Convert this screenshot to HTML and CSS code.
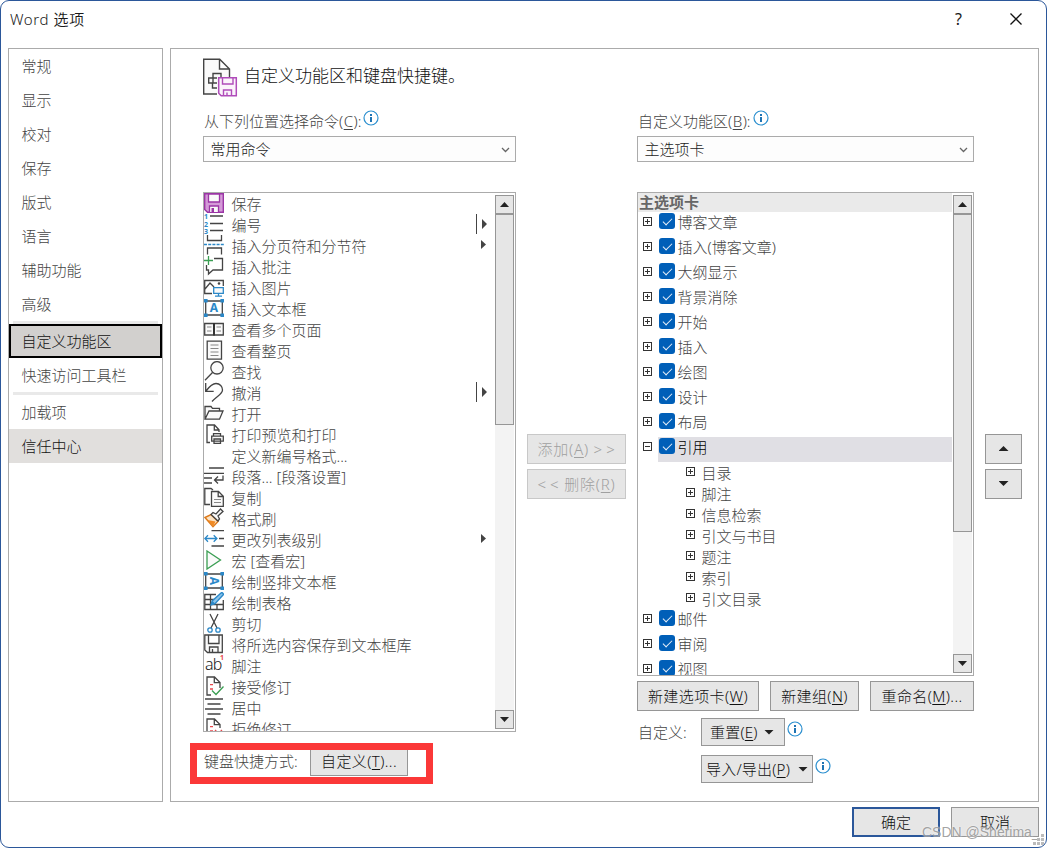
FILE: index.html
```html
<!DOCTYPE html>
<html lang="zh-CN">
<head>
<meta charset="UTF-8">
<meta name="viewport" content="width=device-width, initial-scale=1.0">
<title>Word 选项</title>
<link rel="stylesheet" href="styles.css">
</head>
<body>

<svg class="sprite" width="0" height="0">
  <symbol id="i-save" viewBox="0 0 20 20"><path d="M.7.7h18.6v18.6H3.5L.7 16.5z" fill="#d49ad8" stroke="#9b35a5" stroke-width="1.4"/><path d="M4.5 1h11v8h-11zM5.5 19v-6h9v6" fill="#fafafa" stroke="#9b35a5" stroke-width="1.3"/><path d="M7.5 15h2.500v4h-2.500z" fill="#9b35a5"/></symbol>
  <symbol id="i-break" viewBox="0 0 20 20"><path d="M3.500 0v5.500h14V0M3.500 19.500v-6.500h14v6.500" class="k"/><path d="M0 9.500h20" class="b" stroke-dasharray="3 1.200"/></symbol>
  <symbol id="i-comment" viewBox="0 0 20 20"><path d="M10 2.500h8.500v11.500H9l-4.500 4v-4H2.500v-5" class="k"/><path d="M4.500 0v9M0 4.500h9" class="g"/></symbol>
  <symbol id="i-picture" viewBox="0 0 20 20"><path d="M8 16.500H.7v-13h18.600V9M1 12l5-6 4 4" class="k"/><circle cx="15" cy="6.500" r="1.300" fill="#444"/><path d="M9.700 10.700h9.600v5.600H9.700zM14.500 16.300v2.500M11 19.200h7" class="b f"/></symbol>
  <symbol id="i-frame" viewBox="0 0 20 20"><path d="M1.700 3h16.600v14H1.700z" class="k"/><path d="M0 1h3.600v3.600H0zM16.400 1H20v3.600h-3.600zM0 15.400h3.600V19H0zM16.400 15.400H20V19h-3.600z" fill="#2b88c8"/></symbol>
  <symbol id="i-book" viewBox="0 0 20 20"><path d="M.7 4.500h18.600v11.500H.7z" class="k f"/><path d="M10 4v12.500" stroke="#333" stroke-width="2"/><path d="M3 8h4.500M3 12h4.500M12.500 8H17M12.500 12H17" class="t"/></symbol>
  <symbol id="i-page" viewBox="0 0 20 20"><path d="M3.200 1.200h14.300v18H3.200z" class="k f"/><path d="M6.500 5h8M6.500 8.500h8M6.500 12h8M6.500 15.500h8" class="t"/></symbol>
  <symbol id="i-find" viewBox="0 0 20 20"><circle cx="13" cy="6.800" r="6.200" class="k f"/><path d="M8.500 11.500L1 19.300" class="k"/></symbol>
  <symbol id="i-undo" viewBox="0 0 20 20"><path d="M1.700 1v8.300h8M2 9C5 5 8 1.500 12 1.500c4 0 6.500 3 6.500 6.500 0 4-5.500 6-10.500 11.500" class="k"/></symbol>
  <symbol id="i-open" viewBox="0 0 20 20"><path d="M1 16V3.500h6l1.500 1.800h7V8M1 16.200L5 8h14l-3.500 8.200z" class="k f"/></symbol>
  <symbol id="i-print" viewBox="0 0 20 20"><path d="M6 18.500H3V1h7.500L15 5.800V8M10.300 1v5H15" class="k"/><path d="M9.500 12V9.700h7V12M7.700 12.200h11.600v5H7.700zM10 15h6.500v4.300H10z" class="k f"/></symbol>
  <symbol id="i-para" viewBox="0 0 20 20"><path d="M5 2h15M0 7.300h20M0 12h8M0 17h8M19 9.500V14h-8M14 10.500L10.500 14l3.500 3.500" class="k"/></symbol>
  <symbol id="i-copy" viewBox="0 0 20 20"><path d="M6 17.500H.8v-16H7L9 3" class="k"/><path d="M7.500 4.500h7l4.800 4.800v10H7.500zM14.200 4.500v5h5" class="k f"/><path d="M10 12.500h7M10 15.500h7" class="t"/></symbol>
  <symbol id="i-brush" viewBox="0 0 20 20"><path d="M1 9.500l6-3 7 7-5 5.300z" fill="#fbe3c4" stroke="#dd7a1b" stroke-width="1.400"/><path d="M3.500 12l8 1.500L9 18.500z" fill="#f08a24"/><path d="M7 6.500l2-2 3 1.500 4.500-5 2.500 2.500-5 4.500 1.500 3-1.500 2z" class="k f"/></symbol>
  <symbol id="i-level" viewBox="0 0 20 20"><path d="M7.500 1.700H20M15 9.500h5M7.500 17H20" class="k"/><path d="M.8 9.500h12M4 6.300L.8 9.500 4 12.700M9.700 6.300l3.200 3.200-3.200 3.200" class="b"/></symbol>
  <symbol id="i-macro" viewBox="0 0 20 20"><path d="M3 1l13.500 9L3 19z" class="g f"/></symbol>
  <symbol id="i-table" viewBox="0 0 20 20"><path d="M12 2.500H.8v15h18.500V8M.8 7.500h9M.8 12.500h18.500M6.500 2.500v15M13 12v5.500" class="k"/><path d="M7 13l1.200-4L17 1c1.200-1 3 .8 2 2L11 11.700z" fill="#8cc4ea" stroke="#2b88c8" stroke-width="1.400"/><path d="M7 13l1.500-4 2.500 2.500z" fill="#2b88c8"/></symbol>
  <symbol id="i-cut" viewBox="0 0 20 20"><path d="M6 1l7 14M14 1L7 15" class="k"/><circle cx="6" cy="17" r="2.200" class="b"/><circle cx="14" cy="17" r="2.200" class="b"/></symbol>
  <symbol id="i-disk" viewBox="0 0 20 20"><path d="M.8 1h17.500v17.500H3.500L.8 16zM4.500 1v8.500h10.500V1M5.500 18.500V13h8.500v5.500M8.500 15v3.500" class="k f"/></symbol>
  <symbol id="i-accept" viewBox="0 0 20 20"><path d="M7 19H3V1h7.500L16 6.500V12M10.300 1v5.700H16" class="k"/><path d="M6 8.700h3M6 13h3" class="r"/><path d="M8 14.500l4 4 7.500-8" class="g"/></symbol>
  <symbol id="i-center" viewBox="0 0 20 20"><path d="M1 2h18M3.500 7h13M1 12h18M3.500 17h13" class="k"/></symbol>
  <symbol id="i-reject" viewBox="0 0 20 20"><path d="M7 19H3V1h7.500L16 6.500V10M10.300 1v5.700H16" class="k"/><path d="M6 8.700h3M6 13h3M11 12l7 7M18 12l-7 7" class="r"/></symbol>
  <symbol id="i-info" viewBox="0 0 16 16"><circle cx="8" cy="8" r="7" fill="#fff" stroke="#2b8fcf" stroke-width="1.200"/><path d="M7 4h2v2H7zM7 7h2v5H7z" fill="#1e74b4"/></symbol>
</svg>

<div class="window">
  <div class="titlebar">
    <span class="title">Word 选项</span>
    <span class="help">?</span>
    <svg class="close" viewBox="0 0 12 12"><path d="M.5.5l11 11M11.500.5l-11 11" fill="none" stroke="#111" stroke-width="1.300"/></svg>
  </div>

  <div class="content">
    <div class="sidebar">
      <div class="nav-item">常规</div>
      <div class="nav-item">显示</div>
      <div class="nav-item">校对</div>
      <div class="nav-item">保存</div>
      <div class="nav-item">版式</div>
      <div class="nav-item">语言</div>
      <div class="nav-item">辅助功能</div>
      <div class="nav-item">高级</div>
      <div class="nav-line"></div>
      <div class="nav-item selected">自定义功能区</div>
      <div class="nav-item">快速访问工具栏</div>
      <div class="nav-line"></div>
      <div class="nav-item">加载项</div>
      <div class="nav-item hover">信任中心</div>
    </div>

    <div class="panel">
      <div class="heading">
        <svg class="heading-icon" viewBox="0 0 35 39"><path d="M14 36H.7V1.200h16L26.500 11v8M16.500 1.200V11h10" fill="#fafafa" stroke="#444" stroke-width="1.400"/><path d="M10 19.500V15.500h8V19M9.500 20H5.700v5h3.800M14 20h-4v5h4M9.500 25.500V30H14" fill="none" stroke="#444" stroke-width="1.400"/><path d="M15.700 19.700h17.600v18H18.200l-2.500-2.500z" fill="#fbf3fb" stroke="#b04cba" stroke-width="1.500"/><path d="M19.500 20v6h10.500v-6M20.500 37.500V32h8v5.500M24 34.500v3" fill="none" stroke="#b04cba" stroke-width="1.400"/></svg>
        <span>自定义功能区和键盘快捷键。</span>
      </div>

      <div class="columns">
        <div class="col-left">
          <div class="label"><span>从下列位置选择命令(<u>C</u>):</span><svg class="info"><use href="#i-info"/></svg></div>
          <div class="select">常用命令<svg class="chevron" viewBox="0 0 9 6"><path d="M1 1l3.500 3.500L8 1" fill="none" stroke="#666" stroke-width="1.300"/></svg></div>
          <div class="listbox commands">
            <div class="rows">
              <div class="cmd"><svg><use href="#i-save"/></svg>保存</div>
              <div class="cmd"><svg viewBox="0 0 20 20"><path d="M6 2h13M6 9.500h13M6 16.500h13" class="k"/><g class="digits"><text x="0" y="5">1</text><text x="0" y="12.500">2</text><text x="0" y="20">3</text></g></svg>编号<i class="split"></i></div>
              <div class="cmd"><svg><use href="#i-break"/></svg>插入分页符和分节符<i class="more"></i></div>
              <div class="cmd"><svg><use href="#i-comment"/></svg>插入批注</div>
              <div class="cmd"><svg><use href="#i-picture"/></svg>插入图片</div>
              <div class="cmd"><svg viewBox="0 0 20 20"><use href="#i-frame"/><text x="10" y="14" class="letter">A</text></svg>插入文本框</div>
              <div class="cmd"><svg><use href="#i-book"/></svg>查看多个页面</div>
              <div class="cmd"><svg><use href="#i-page"/></svg>查看整页</div>
              <div class="cmd"><svg><use href="#i-find"/></svg>查找</div>
              <div class="cmd"><svg><use href="#i-undo"/></svg>撤消<i class="split"></i></div>
              <div class="cmd"><svg><use href="#i-open"/></svg>打开</div>
              <div class="cmd"><svg><use href="#i-print"/></svg>打印预览和打印</div>
              <div class="cmd"><svg></svg>定义新编号格式...</div>
              <div class="cmd"><svg><use href="#i-para"/></svg>段落... [段落设置]</div>
              <div class="cmd"><svg><use href="#i-copy"/></svg>复制</div>
              <div class="cmd"><svg><use href="#i-brush"/></svg>格式刷</div>
              <div class="cmd"><svg><use href="#i-level"/></svg>更改列表级别<i class="more"></i></div>
              <div class="cmd"><svg><use href="#i-macro"/></svg>宏 [查看宏]</div>
              <div class="cmd"><svg viewBox="0 0 20 20"><use href="#i-frame"/><text x="10" y="14" class="letter" transform="rotate(90 10 10)">A</text></svg>绘制竖排文本框</div>
              <div class="cmd"><svg><use href="#i-table"/></svg>绘制表格</div>
              <div class="cmd"><svg><use href="#i-cut"/></svg>剪切</div>
              <div class="cmd"><svg><use href="#i-disk"/></svg>将所选内容保存到文本框库</div>
              <div class="cmd"><svg viewBox="0 0 20 20"><text x="1" y="15" class="ab">ab</text><text x="16" y="5" class="sup">1</text></svg>脚注</div>
              <div class="cmd"><svg><use href="#i-accept"/></svg>接受修订</div>
              <div class="cmd"><svg><use href="#i-center"/></svg>居中</div>
              <div class="cmd"><svg><use href="#i-reject"/></svg>拒绝修订</div>
            </div>
            <div class="scrollbar">
              <div class="sb-btn"><i class="up"></i></div>
              <div class="thumb thumb-left"></div>
              <div class="sb-btn sb-end"><i class="down"></i></div>
            </div>
          </div>
          <div class="shortcut">
            <span>键盘快捷方式:</span>
            <div class="btn btn-custom"><span>自定义(<u>T</u>)...</span></div>
            <div class="mark"></div>
          </div>
        </div>

        <div class="col-mid">
          <div class="btn disabled"><span>添加(<u>A</u>) &gt;&thinsp;&gt;</span></div>
          <div class="btn disabled"><span>&lt;&thinsp;&lt; 删除(<u>R</u>)</span></div>
        </div>

        <div class="col-right">
          <div class="label"><span>自定义功能区(<u>B</u>):</span><svg class="info"><use href="#i-info"/></svg></div>
          <div class="select">主选项卡<svg class="chevron" viewBox="0 0 9 6"><path d="M1 1l3.500 3.500L8 1" fill="none" stroke="#666" stroke-width="1.300"/></svg></div>
          <div class="listbox tree">
            <div class="rows">
              <div class="tree-head">主选项卡</div>
              <div class="tab"><i class="box"></i><b class="check"></b><span>博客文章</span></div>
              <div class="tab"><i class="box"></i><b class="check"></b><span>插入(博客文章)</span></div>
              <div class="tab"><i class="box"></i><b class="check"></b><span>大纲显示</span></div>
              <div class="tab"><i class="box"></i><b class="check"></b><span>背景消除</span></div>
              <div class="tab"><i class="box"></i><b class="check"></b><span>开始</span></div>
              <div class="tab"><i class="box"></i><b class="check"></b><span>插入</span></div>
              <div class="tab"><i class="box"></i><b class="check"></b><span>绘图</span></div>
              <div class="tab"><i class="box"></i><b class="check"></b><span>设计</span></div>
              <div class="tab"><i class="box"></i><b class="check"></b><span>布局</span></div>
              <div class="tab active"><i class="box open"></i><b class="check"></b><span>引用</span></div>
              <div class="group"><i class="box"></i>目录</div>
              <div class="group"><i class="box"></i>脚注</div>
              <div class="group"><i class="box"></i>信息检索</div>
              <div class="group"><i class="box"></i>引文与书目</div>
              <div class="group"><i class="box"></i>题注</div>
              <div class="group"><i class="box"></i>索引</div>
              <div class="group"><i class="box"></i>引文目录</div>
              <div class="tab"><i class="box"></i><b class="check"></b><span>邮件</span></div>
              <div class="tab"><i class="box"></i><b class="check"></b><span>审阅</span></div>
              <div class="tab"><i class="box"></i><b class="check"></b><span>视图</span></div>
            </div>
            <div class="scrollbar">
              <div class="sb-btn"><i class="up"></i></div>
              <div class="thumb thumb-right"></div>
              <div class="sb-btn sb-end"><i class="down"></i></div>
            </div>
          </div>
          <div class="tree-buttons">
            <div class="btn btn-tab"><span>新建选项卡(<u>W</u>)</span></div>
            <div class="btn btn-group"><span>新建组(<u>N</u>)</span></div>
            <div class="btn btn-rename"><span>重命名(<u>M</u>)...</span></div>
          </div>
          <div class="reset-row">
            <span class="reset-label">自定义:</span>
            <div class="btn btn-reset"><span>重置(<u>E</u>)</span><i class="down"></i></div>
            <svg class="info"><use href="#i-info"/></svg>
          </div>
          <div class="reset-row">
            <span class="reset-label"></span>
            <div class="btn btn-import"><span>导入/导出(<u>P</u>)</span><i class="down"></i></div>
            <svg class="info"><use href="#i-info"/></svg>
          </div>
        </div>

        <div class="col-order">
          <div class="btn"><i class="up"></i></div>
          <div class="btn"><i class="down"></i></div>
        </div>
      </div>
    </div>
  </div>

  <div class="footer">
    <div class="btn ok">确定</div>
    <div class="btn">取消</div>
  </div>

  <div class="watermark">CSDN @Sherima_</div>
  <svg class="grip" viewBox="0 0 12 12"><path d="M8 0h3v3H8zM4 4h3v3H4zM8 4h3v3H8zM0 8h3v3H0zM4 8h3v3H4zM8 8h3v3H8z" fill="#bbb"/></svg>
</div>

</body>
</html>
```

FILE: styles.css
```css
* {
  box-sizing: border-box;
}
body {
  margin: 0;
  background: #fff;
  font-family: "Noto Sans", "Noto Sans CJK SC", sans-serif;
  font-size: 15px;
  font-weight: 300;
  color: #444;
}
.sprite {
  display: block;
}
.window {
  position: relative;
  width: 1047px;
  height: 848px;
  border: 1px solid #2b579a;
  border-radius: 9px;
  background: #fff;
  overflow: hidden;
}

/* title bar */
.titlebar {
  height: 47px;
  padding: 0 24px 11px 9px;
  display: flex;
  align-items: center;
  color: #1a1a1a;
  font-weight: 400;
}
.title {
  flex: 1;
  padding-bottom: 2px;
  font-weight: 350;
  letter-spacing: 0.6px;
}
.help {
  width: 55px;
  font-size: 16px;
}
.close {
  width: 12px;
  height: 12px;
}
.content {
  display: flex;
  gap: 7px;
  padding: 0 7px;
  height: 754px;
}

/* sidebar */
.sidebar {
  width: 155px;
  border: 1px solid #ababab;
}
.nav-item {
  height: 34px;
  line-height: 34px;
  padding-left: 12.5px;
}
.nav-line {
  height: 3px;
  margin: 0 4px;
  background: #e9e9e9;
}
.nav-item.selected {
  border: 2px solid #000;
  padding-left: 10.5px;
  line-height: 30px;
  background: #d2d0ce;
  color: #111;
}
.nav-item.hover {
  background: #e1dfdd;
  color: #111;
}

/* main panel */
.panel {
  flex: 1;
  border: 1px solid #ababab;
  padding: 9px 0 0 32px;
}
.heading {
  height: 52px;
  display: flex;
  gap: 6px;
  font-size: 17px;
  line-height: 36px;
  color: #111;
}
.heading-icon {
  width: 35px;
  height: 39px;
}
.columns {
  display: grid;
  grid-template-columns: 313px 99px 337px 37px;
  column-gap: 11px;
}
.label {
  height: 26px;
  line-height: 23px;
  padding-left: 1px;
  display: flex;
}
.label u {
  margin: 0 0.5px;
}
u {
  text-underline-offset: 2px;
  text-decoration-thickness: 1px;
}
.info {
  width: 16px;
  height: 16px;
}
.label .info {
  margin-left: 2px;
}
.select {
  height: 26px;
  margin-bottom: 30px;
  padding: 0 5px 0 6.5px;
  border: 1px solid #ababab;
  background: #fdfdfd;
  color: #222;
  line-height: 24px;
  display: flex;
  justify-content: space-between;
}
.chevron {
  width: 9px;
  height: 6px;
  margin-top: 10px;
}
.listbox {
  border: 1px solid #ababab;
  display: flex;
  overflow: hidden;
}
.commands {
  height: 540px;
}
.tree {
  height: 484px;
}
.rows {
  flex: 1;
}
.tree .rows {
  margin-right: 1px;
}

/* command list */
.cmd {
  height: 21px;
  line-height: 23px;
  display: flex;
  white-space: nowrap;
}
.cmd svg {
  width: 20px;
  height: 20px;
  margin-right: 7.5px;
}
.k, .b, .g, .r, .t {
  fill: none;
  stroke: #444;
  stroke-width: 1.3;
}
.t {
  stroke: #888;
  stroke-width: 1.2;
}
.b {
  stroke: #2b88c8;
}
.g {
  stroke: #3a9e52;
}
.r {
  stroke: #e8484d;
}
.f {
  fill: #fafafa;
}
.digits {
  font: bold 7px "Noto Sans", sans-serif;
  fill: #2b88c8;
}
.letter {
  font: bold 12px "Noto Sans", sans-serif;
  fill: #2b88c8;
  text-anchor: middle;
}
.ab {
  font: 300 16px "Noto Sans", sans-serif;
  letter-spacing: -0.8px;
  fill: #222;
}
.sup {
  font: bold 7px "Noto Sans", sans-serif;
  fill: #e8484d;
}
.more, .split {
  margin: 5px 9px 0 auto;
  width: 5px;
  height: 9px;
  background: #444;
  clip-path: polygon(0 0, 100% 50%, 0 100%);
}
.split {
  margin: 0 8px 0 auto;
  width: 11px;
  height: 20px;
  clip-path: polygon(0 0, 1px 0, 1px 20px, 6px 20px, 6px 5px, 11px 10px, 6px 15px, 6px 20px, 0 20px);
}

/* scroll bars */
.scrollbar {
  width: 20px;
  padding: 2px 1px 2px 0;
  display: flex;
  flex-direction: column;
  background: linear-gradient(#f3f3f3, #f3f3f3) no-repeat 0 2px / 19px calc(100% - 4px);
}
.sb-btn, .thumb {
  border: 1px solid #969696;
  background: #e6e6e6;
}
.sb-btn {
  height: 19px;
  display: flex;
  align-items: center;
  justify-content: center;
}
.sb-end {
  margin-top: auto;
}
.thumb-left {
  height: 211px;
}
.thumb-right {
  height: 318px;
}
.up, .down {
  width: 9px;
  height: 5px;
  background: #222;
  clip-path: polygon(50% 0, 100% 100%, 0 100%);
}
.down {
  clip-path: polygon(0 0, 100% 0, 50% 100%);
}
.btn .up, .btn .down {
  width: 10px;
}

/* tab tree */
.tree-head {
  height: 19px;
  line-height: 19px;
  padding-left: 1px;
  background: #eaeaea;
  color: #666;
  font-weight: 700;
}
.tab {
  height: 25px;
  line-height: 21px;
  display: flex;
  padding-left: 5px;
}
.tab span {
  flex: 1;
  padding-left: 2.5px;
}
.tab.active {
  background: linear-gradient(#e0dfe4, #e0dfe4) no-repeat 20px 0;
  color: #000;
}
.box {
  width: 9px;
  height: 9px;
  margin: 5px 7px 0 0;
  border: 1px solid #333;
  background:
    linear-gradient(#333, #333) no-repeat 1px 3px / 5px 1px,
    linear-gradient(#333, #333) no-repeat 3px 1px / 1px 5px;
}
.box.open {
  background: linear-gradient(#333, #333) no-repeat 1px 3px / 5px 1px;
}
.check {
  width: 16px;
  height: 16px;
  margin-top: 1px;
  border-radius: 3px;
  background: #005fb8;
}
.check::after {
  content: "";
  display: block;
  width: 8px;
  height: 4px;
  margin: 5px 0 0 4px;
  border: solid #e6eff8;
  border-width: 0 0 1px 1px;
  transform: rotate(-45deg);
}
.group {
  height: 21px;
  line-height: 23px;
  display: flex;
  padding-left: 48px;
}
.group .box {
  margin-right: 6.5px;
}

/* buttons */
.btn {
  height: 30px;
  padding-bottom: 1px;
  border: 1px solid #969696;
  background: #e6e6e6;
  color: #111;
  display: flex;
  align-items: center;
  justify-content: center;
  white-space: nowrap;
}
.btn span {
  letter-spacing: 0.4px;
}
.btn.disabled {
  border-color: #c8c8c8;
  color: #a0a0a0;
}
.btn.disabled span {
  letter-spacing: 0.8px;
}
.col-mid, .col-order {
  padding-top: 324px;
  display: flex;
  flex-direction: column;
  gap: 5px;
}
.shortcut {
  position: relative;
  display: flex;
  height: 45px;
  padding: 15px 0 0 1px;
  line-height: 28px;
}
.shortcut > span {
  width: 106px;
}
.btn-custom {
  width: 98px;
  height: 29px;
}
.mark {
  position: absolute;
  left: -13px;
  top: 11px;
  width: 243px;
  height: 41px;
  border: 7px solid #fb3838;
}
.tree-buttons {
  display: flex;
  justify-content: space-between;
  padding: 5px 0 7px;
}
.btn-tab {
  width: 122px;
}
.btn-group {
  width: 89px;
}
.btn-rename {
  width: 104px;
}
.reset-row {
  display: flex;
  height: 28px;
  margin-bottom: 9px;
  line-height: 28px;
}
.reset-label {
  width: 64px;
  padding-left: 1px;
}
.reset-row .btn {
  height: 28px;
  padding: 0 10px 0 8px;
  justify-content: space-between;
  margin-right: 2px;
}
.reset-row .btn span {
  letter-spacing: 0.2px;
}
.reset-row .info {
  margin-top: 2.5px;
}
.btn-reset {
  width: 84px;
}
.reset-row .btn-import {
  width: 112px;
  padding: 0 4px;
}

.footer {
  display: flex;
  justify-content: flex-end;
  gap: 11px;
  padding: 5px 7px 0;
}
.footer .btn {
  width: 88px;
}
.footer .ok {
  border: 2px solid #2b579a;
}
.watermark {
  position: absolute;
  left: 921px;
  top: 822px;
  font: 14px/18px "Liberation Sans", sans-serif;
  color: rgba(140, 140, 140, 0.8);
  text-shadow: 0 0 2px #fff;
}
.grip {
  position: absolute;
  left: 1032px;
  top: 833px;
  width: 12px;
  height: 12px;
}
```
